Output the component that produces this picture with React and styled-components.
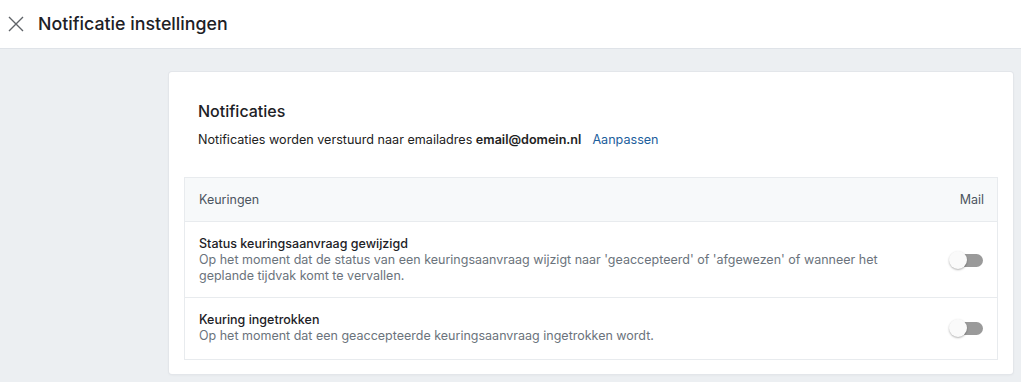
import React, { useState } from "react";
import styled, { createGlobalStyle } from "styled-components";

const GlobalStyle = createGlobalStyle`
  html, body {
    margin: 0;
    padding: 0;
    background: #eceff2;
    font-family: Inter, "Noto Sans", sans-serif;
    color: #222;
  }
  * { box-sizing: border-box; }
`;

const Page = styled.div`
  min-height: 382px;
  display: flex;
  flex-direction: column;
`;

const Header = styled.header`
  height: 49px;
  background: #fff;
  border-bottom: 1px solid #dfe3e8;
  display: flex;
  align-items: center;
  padding: 0 0 1px 7px;
  gap: 13px;
`;

const CloseButton = styled.button`
  border: 0;
  background: none;
  padding: 0;
  width: 18px;
  height: 18px;
  display: flex;
  align-items: center;
  justify-content: center;
  color: #5f6368;
  cursor: pointer;
`;

const Title = styled.h1`
  margin: 0;
  font-size: 17.8px;
  font-weight: 500;
  color: #1d2126;
`;

const Content = styled.main`
  padding: 23px 8px 8px 169px;
`;

const Card = styled.section`
  background: #fff;
  border-radius: 3px;
  box-shadow: 0 0 0 1px #e3e6ea, 0 1px 3px rgba(0, 0, 0, 0.06);
  padding: 27px 15px 14px 15px;
`;

const CardTitle = styled.h2`
  margin: 0 0 0 14px;
  font-size: 16px;
  font-weight: 500;
  color: #1d2126;
  line-height: 24px;
`;

const Intro = styled.p`
  margin: 8px 0 0 14px;
  font-size: 12.6px;
  line-height: 18px;
  color: #222;

  strong {
    font-weight: 600;
  }
`;

const Link = styled.a`
  color: #1c5e9c;
  text-decoration: none;
  margin-left: 11px;
  cursor: pointer;
`;

const Table = styled.div`
  margin-top: 28px;
  border: 1px solid #e8ebee;
`;

const HeadRow = styled.div`
  height: 44px;
  background: #f7f9fa;
  border-bottom: 1px solid #e8ebee;
  display: flex;
  align-items: center;
  justify-content: space-between;
  padding: 0 13px 0 14px;
  font-size: 12.5px;
  color: #4c5560;
`;

const Row = styled.div`
  display: flex;
  align-items: center;
  justify-content: space-between;
  padding: 13px 13px ${(p) => (p.last ? "15px" : "13px")} 14px;
  border-bottom: ${(p) => (p.last ? "0" : "1px solid #e8ebee")};
`;

const RowText = styled.div`
  max-width: 700px;
`;

const RowTitle = styled.div`
  font-size: 12.5px;
  font-weight: 500;
  color: #1d2126;
  line-height: 17px;
`;

const RowDesc = styled.div`
  font-size: 12.5px;
  color: #6b737c;
  line-height: 16px;
`;

const Switch = styled.button`
  position: relative;
  width: 34px;
  height: 18px;
  border: 0;
  background: none;
  padding: 0;
  margin-right: 1px;
  cursor: pointer;

  &::before {
    content: "";
    position: absolute;
    left: 2px;
    right: 0;
    top: 3px;
    height: 13px;
    border-radius: 7px;
    background: ${(p) => (p.on ? "#8fb3d6" : "#9a9a9a")};
  }

  &::after {
    content: "";
    position: absolute;
    top: 0;
    left: ${(p) => (p.on ? "16px" : "0")};
    width: 18px;
    height: 18px;
    border-radius: 50%;
    background: ${(p) => (p.on ? "#1c5e9c" : "#fafafa")};
    box-shadow: 0 1px 2px rgba(0, 0, 0, 0.3);
  }
`;

const items = [
  {
    title: "Status keuringsaanvraag gewijzigd",
    desc: "Op het moment dat de status van een keuringsaanvraag wijzigt naar 'geaccepteerd' of 'afgewezen' of wanneer het geplande tijdvak komt te vervallen.",
  },
  {
    title: "Keuring ingetrokken",
    desc: "Op het moment dat een geaccepteerde keuringsaanvraag ingetrokken wordt.",
  },
];

export default function App() {
  const [on, setOn] = useState([false, false]);

  return (
    <Page>
      <GlobalStyle />
      <Header>
        <CloseButton aria-label="Sluiten">
          <svg width="16" height="16" viewBox="0 0 16 16" fill="none">
            <path d="M1 1L15 15M15 1L1 15" stroke="currentColor" strokeWidth="1.4" />
          </svg>
        </CloseButton>
        <Title>Notificatie instellingen</Title>
      </Header>
      <Content>
        <Card>
          <CardTitle>Notificaties</CardTitle>
          <Intro>
            Notificaties worden verstuurd naar emailadres <strong>email@domein.nl</strong>
            <Link>Aanpassen</Link>
          </Intro>
          <Table>
            <HeadRow>
              <span>Keuringen</span>
              <span>Mail</span>
            </HeadRow>
            {items.map((item, i) => (
              <Row key={item.title} last={i === items.length - 1}>
                <RowText>
                  <RowTitle>{item.title}</RowTitle>
                  <RowDesc>{item.desc}</RowDesc>
                </RowText>
                <Switch
                  on={on[i]}
                  onClick={() => setOn(on.map((v, j) => (j === i ? !v : v)))}
                />
              </Row>
            ))}
          </Table>
        </Card>
      </Content>
    </Page>
  );
}
